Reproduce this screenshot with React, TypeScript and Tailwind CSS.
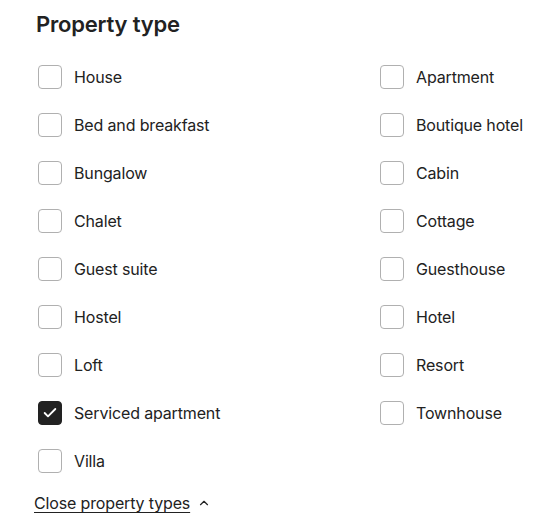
import { Check, ChevronUp } from 'lucide-react';

const LEFT = ['House', 'Bed and breakfast', 'Bungalow', 'Chalet', 'Guest suite', 'Hostel', 'Loft', 'Serviced apartment', 'Villa'];
const RIGHT = ['Apartment', 'Boutique hotel', 'Cabin', 'Cottage', 'Guesthouse', 'Hotel', 'Resort', 'Townhouse'];

const CHECKED = ['Serviced apartment'];

function Option({ label }: { label: string }) {
  const checked = CHECKED.includes(label);
  return (
    <label className="flex items-center h-[48px] gap-3 cursor-pointer">
      <span
        className={
          checked
            ? 'w-6 h-6 rounded-[4px] bg-[#222222] border border-[#222222] flex items-center justify-center shrink-0'
            : 'w-6 h-6 rounded-[4px] bg-white border border-[#b0b0b0] shrink-0'
        }
      >
        {checked && <Check className="w-4 h-4 text-white" strokeWidth={2.75} />}
      </span>
      <span className="text-[16px] text-[#222222] tracking-[-0.15px]">{label}</span>
    </label>
  );
}

export default function App() {
  return (
    <div className="w-[552px] h-[529px] bg-white font-['Inter',sans-serif] pt-[6px]">
      <h2 className="pl-[36px] text-[22px] font-semibold text-[#222222] leading-[36px] tracking-[-0.2px]">
        Property type
      </h2>
      <div className="grid grid-cols-[342px_1fr] pl-[38px] mt-[11px]">
        <div className="flex flex-col">
          {LEFT.map(l => (
            <Option key={l} label={l} />
          ))}
        </div>
        <div className="flex flex-col">
          {RIGHT.map(r => (
            <Option key={r} label={r} />
          ))}
        </div>
      </div>
      <button className="ml-[34px] mt-[6px] flex items-center gap-[7px] text-[16px] text-[#222222] tracking-[-0.15px]">
        <span className="underline underline-offset-[3px]">Close property types</span>
        <ChevronUp className="w-[14px] h-[14px]" strokeWidth={2} />
      </button>
    </div>
  );
}
